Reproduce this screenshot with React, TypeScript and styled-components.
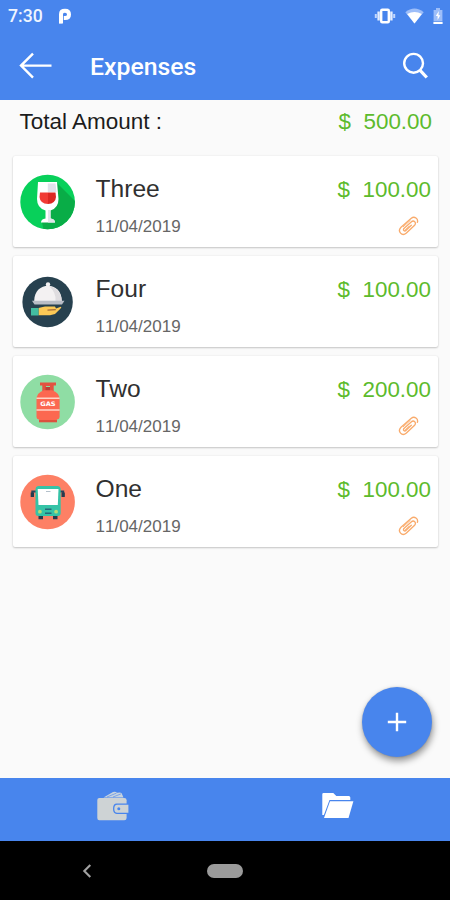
import React from "react";
import styled, { createGlobalStyle } from "styled-components";

const BLUE = "#4885ed";

const GlobalStyle = createGlobalStyle`
  * { box-sizing: border-box; }
  body { margin: 0; background: #fafafa; }
  svg { display: block; flex: none; }
`;

const Screen = styled.div`
  width: 450px;
  height: 900px;
  display: flex;
  flex-direction: column;
  overflow: hidden;
  background: #fafafa;
  font-family: "Liberation Sans", Arial, sans-serif;
`;

const Header = styled.header`
  height: 100px;
  flex: none;
  background: ${BLUE};
  color: #fff;
  font-family: Roboto, sans-serif;
`;

const StatusBar = styled.div`
  height: 32px;
  display: flex;
  align-items: center;
  padding: 0 7px 0 8px;
`;

const Clock = styled.span`
  font-size: 17.6px;
  line-height: 32px;
  width: 50px;
  font-weight: 500;
  color: #eff5ff;
`;

const StatusIcons = styled.div`
  margin-left: auto;
  display: flex;
  align-items: center;
  gap: 9px;
`;

const Toolbar = styled.div`
  height: 68px;
  display: flex;
  align-items: center;
  padding: 0 20px 0 19px;
`;

const Title = styled.h1`
  margin: 2px 0 0 38px;
  flex: 1;
  font-size: 24.8px;
  font-weight: 500;
  line-height: 32px;
`;

const Content = styled.main`
  flex: 1;
  display: flex;
  flex-direction: column;
`;

const TotalRow = styled.div`
  display: flex;
  justify-content: space-between;
  height: 56px;
  padding: 9px 18px 0 19.5px;
  font-size: 22.5px;
  line-height: 26px;
  color: #1c1c1c;
`;

const Amount = styled.span`
  color: #5cbb2c;
  font-size: 22.4px;
  line-height: 26px;
  white-space: pre;
`;

const ExpenseList = styled.ul`
  list-style: none;
  margin: 0;
  padding: 0 12px 0 13px;
  display: flex;
  flex-direction: column;
  gap: 9px;
`;

const Card = styled.li`
  height: 91px;
  display: flex;
  padding: 0 7px 0 7px;
  background: #fff;
  border-radius: 2px;
  box-shadow: 0 1px 2px rgba(0, 0, 0, 0.2), 0 0 2px rgba(0, 0, 0, 0.08);
`;

const Category = styled.div`
  width: 75.5px;
  padding-top: 18px;
`;

const Details = styled.div`
  flex: 1;
  padding-top: 19px;
`;

const Name = styled.div`
  font-size: 24.6px;
  line-height: 28px;
  color: #303030;
`;

const DateText = styled.div`
  margin-top: 14px;
  font-size: 17px;
  line-height: 20px;
  font-kerning: none;
  color: #666;
`;

const Values = styled.div`
  display: flex;
  flex-direction: column;
  align-items: flex-end;
  padding-top: 21px;
`;

const ClipSlot = styled.div`
  margin: 13px 12px 0 0;
`;

const FabRow = styled.div`
  margin-top: auto;
  display: flex;
  justify-content: flex-end;
  padding: 0 18px 21px 0;
`;

const Fab = styled.button`
  width: 70px;
  height: 70px;
  border: 0;
  padding: 0;
  border-radius: 50%;
  background: ${BLUE};
  display: flex;
  align-items: center;
  justify-content: center;
  box-shadow: 1px 4px 7px rgba(0, 0, 0, 0.42), 0 0 2px rgba(0, 0, 0, 0.15);
`;

const Tabs = styled.nav`
  height: 63px;
  flex: none;
  display: grid;
  grid-template-columns: 1fr 1fr;
  background: ${BLUE};
`;

const Tab = styled.div`
  display: flex;
  justify-content: center;
  padding-top: 12px;
`;

const SystemNav = styled.div`
  height: 59px;
  flex: none;
  display: flex;
  align-items: center;
  background: #000;
  padding: 0 0 0 82px;
`;

const HomePill = styled.div`
  width: 36px;
  height: 14px;
  margin-left: 115px;
  border-radius: 7px;
  background: #9b9b9b;
`;

const ParkingLogo = () => (
  <svg width="14" height="17" viewBox="0 0 14 17">
    <path d="M3 15.2V6.2Q3 2.8 7 2.8T11 6.4T7 10H5.8" fill="none" stroke="#fff" strokeWidth="4" />
    <path d="M1 7V15.5H4.6L5 11" fill="#fff" />
  </svg>
);

const VibrateIcon = () => (
  <svg width="22" height="18" viewBox="0 0 22 18">
    <rect x="7.2" y="2.8" width="7.6" height="12.4" rx="1" fill="none" stroke="#fff" strokeWidth="2.4" />
    <path d="M4.6 4.5V13.5M17.4 4.5V13.5" stroke="#e4eeff" strokeWidth="2.4" />
    <path d="M1.8 7V11M20.2 7V11" stroke="#c3d8fd" strokeWidth="2" />
  </svg>
);

const WifiIcon = () => (
  <svg width="19" height="16" viewBox="0 0 19 16">
    <path d="M.3 4.3Q9.5-3.2 18.7 4.3L9.5 15.5Z" fill="#9dbef9" />
    <path d="M2.2 6Q9.5 2 16.8 6L9.5 15.5Z" fill="#fff" />
  </svg>
);

const BatteryIcon = () => (
  <svg width="10" height="17" viewBox="0 0 10 17">
    <path d="M3 0H7V2H9.4V13H.6V2H3Z" fill="#9dbef9" />
    <path d="M5.8 3L2.8 8H4.6V12L7.3 7.2H5.5Z" fill="#fff" />
    <path d="M.4 13.8H9.6V16H.4Z" fill="#fff" />
  </svg>
);

const BackArrow = () => (
  <svg width="33" height="28" viewBox="0 0 33 28" fill="none" stroke="#fff" strokeWidth="2.4">
    <path d="M2 13.6H32.5M14 1.6L2 13.6L14 25.6" />
  </svg>
);

const SearchIcon = () => (
  <svg width="28" height="28" viewBox="0 0 28 28" fill="none" stroke="#fff">
    <circle cx="11.6" cy="11.3" r="9.4" strokeWidth="2.4" />
    <path d="M18.1 18.3L24.8 25.5" strokeWidth="3.2" />
  </svg>
);

const WineIcon = () => (
  <svg width="56" height="56" viewBox="0 0 56 56">
    <defs>
      <clipPath id="wine-disc"><circle cx="27.6" cy="28" r="27.3" /></clipPath>
    </defs>
    <g clipPath="url(#wine-disc)">
      <path d="M0 0H56V56H0Z" fill="#08d05a" />
      <path d="M37 9L58 30V58H24L22 48L28 42Z" fill="#09ad47" />
    </g>
    <path d="M18 8H37L38.5 25Q38.5 34 30.5 36.5V44.5Q35 45 35 48.5H21Q21 45 25.5 44.5V36.5Q17 34 17 25Z" fill="#fff" />
    <path d="M27.8 9.5H35.5L36.5 18H27.8Z" fill="#e0e2ea" />
    <path d="M28 36V48.5H35Q35 45 30.5 44.5V36Z" fill="#e2e6eb" />
    <path d="M20 18.5H28V30Q20 29.5 19.5 23Z" fill="#f13b34" />
    <path d="M28 18.5H35.5L36 23Q35.5 29.5 28 30Z" fill="#db2822" />
  </svg>
);

const DiningIcon = () => (
  <svg width="56" height="56" viewBox="0 0 56 56">
    <circle cx="27.6" cy="28" r="25.2" fill="#27414f" />
    <circle cx="28" cy="10.4" r="2.2" fill="#f3f1f1" />
    <path d="M14.2 27C14 6.5 42 6.5 41.8 27Z" fill="#f3f1f2" />
    <path d="M29 12Q40.5 14 41.8 27H35.5Q36.5 19 29 12Z" fill="#dfdde0" />
    <path d="M12 26.8H44.5L42 30.5H14.5Z" fill="#b9bdc6" />
    <path d="M18.5 34L25 32.4H35L36 34.6L40.8 32.7Q42 33 40.6 34.5L35 40L30 41.3H18.5Z" fill="#fcc956" />
    <path d="M27.5 36.2L35.8 35.6" stroke="#a56c3b" strokeWidth="1.3" />
    <path d="M11 34H18.5V41.5H11Z" fill="#43bda1" />
  </svg>
);

const GasText = styled.text`
  font: bold 6.2px "DejaVu Sans", sans-serif;
  fill: #fff;
`;

const GasIcon = () => (
  <svg width="56" height="56" viewBox="0 0 56 56">
    <circle cx="27.6" cy="28" r="27.3" fill="#8fdda4" />
    <path d="M20 8.5H36V11.5H33.7V17H30V12H26V17H22.3V11.5H20Z" fill="#e35240" />
    <path d="M25.5 13H30V18H25.5Z" fill="#ba3f35" />
    <path d="M24 16.3H32Q39.6 18.5 39.6 26V43Q39.5 45 37 45.5V48H19V45.5Q16.5 45 16.5 43V26Q16.5 18.5 24 16.3Z" fill="#fc6850" />
    <path d="M16.5 24.3H39.6M16.5 36H39.6" stroke="#ffd4c6" strokeWidth="1.4" />
    <path d="M19 46H37V48.3H19Z" fill="#dc513e" />
    <GasText x="20.2" y="32.2" textLength="15.5" lengthAdjust="spacingAndGlyphs">GAS</GasText>
  </svg>
);

const BusIcon = () => (
  <svg width="56" height="56" viewBox="0 0 56 56">
    <circle cx="27.6" cy="28" r="27.3" fill="#fd8065" />
    <path d="M17 17.5H12.3V22M38.5 17.5H43.2V22" fill="none" stroke="#28445b" strokeWidth="2" />
    <path d="M10.7 18.5H14V23H10.7ZM41.5 18.5H44.8V23H41.5ZM18.5 41H23V45.3H18.5ZM33 41H37.5V45.3H33Z" fill="#253b4e" />
    <path d="M18 12H38Q40.7 12.5 40.7 15V39Q40.7 42 38 42H18Q15.5 42 15.5 39V15Q15.5 12.5 18 12Z" fill="#35c3a7" />
    <path d="M17.7 15H38.5L37.8 31H18.5Z" fill="#fff" />
    <path d="M26 17.5H30.5" stroke="#b4c1cb" />
    <path d="M25 35.3H31.5M25 39.2H31.5" stroke="#286779" strokeWidth="1.6" />
    <circle cx="19.9" cy="37.7" r="1.9" fill="#b5dc78" />
    <circle cx="36.1" cy="37.7" r="1.9" fill="#b5dc78" />
  </svg>
);

const ClipIcon = () => (
  <svg width="21" height="20" viewBox="0 0 21 20" fill="none" stroke="#f9ab6c" strokeWidth="1.35" strokeLinecap="round" strokeLinejoin="round">
    <path d="M19.4 6.3C20.5 3 16.5-.4 13.3 2.3L3 11.3C-1 15.5 4 20.8 8.4 17L16.6 9.2C19 6.6 15.7 3.7 13.2 6L6.2 12.3C4.3 14.1 6.6 15.8 8.1 14.3L13.3 9.3" />
    <path d="M12.2 4.5L5.2 10.8M11 10.3L7.4 13.7" strokeWidth=".9" />
  </svg>
);

const PlusIcon = () => (
  <svg width="20" height="20" viewBox="0 0 20 20" stroke="#fff" strokeWidth="2.4">
    <path d="M.8 10H19.2M10 .8V19.2" />
  </svg>
);

const WalletIcon = () => (
  <svg width="33" height="32" viewBox="0 0 33 32">
    <path d="M7.5 7.5L17 2.1Q19.6 1 21 2.8L24 2.6Q26 2.6 26.5 5.3L27.5 7.5Z" fill="#c7d3df" />
    <path d="M11 7L20.5 3.1M17 7L25 3.9" stroke={BLUE} strokeWidth=".6" />
    <path d="M3.3 7.9H28.3Q30.6 7.9 30.6 10.2V28.1Q30.6 30.3 28.3 30.3H3.3Q1.3 30.3 1.3 28.1V10Q1.3 7.9 3.3 7.9Z" fill="#ced3d5" />
    <path d="M33 13.6H20.8Q17 13.6 17 18.8T20.8 23.9H33Z" fill={BLUE} />
    <path d="M32.4 14.7H21.3Q18.3 14.7 18.3 18.8T21.3 22.8H32.4Z" fill="#ced3d5" />
    <circle cx="22.8" cy="18.8" r="1.5" fill={BLUE} />
  </svg>
);

const FolderIcon = () => (
  <svg width="33" height="30" viewBox="0 0 33 30">
    <path d="M1.3 25V4.2Q1.3 2.9 2.5 2.9H12.3L15.3 6H27.8Q29.3 6 29.3 7.6V10H8.5L2.9 25Z" fill="#fff" />
    <path d="M9 11.3H32.4L27.5 28H3Z" fill="#fff" />
  </svg>
);

const NavBack = () => (
  <svg width="10" height="14" viewBox="0 0 10 14">
    <path d="M8.3 1L2.3 7L8.3 13" fill="none" stroke="#a2a2a2" strokeWidth="2.1" />
  </svg>
);

interface Expense {
  name: string;
  date: string;
  amount: string;
  icon: React.ReactNode;
  attached: boolean;
}

const expenses: Expense[] = [
  { name: "Three", date: "11/04/2019", amount: "100.00", icon: <WineIcon />, attached: true },
  { name: "Four", date: "11/04/2019", amount: "100.00", icon: <DiningIcon />, attached: false },
  { name: "Two", date: "11/04/2019", amount: "200.00", icon: <GasIcon />, attached: true },
  { name: "One", date: "11/04/2019", amount: "100.00", icon: <BusIcon />, attached: true },
];

export default function App() {
  return (
    <Screen>
      <GlobalStyle />
      <Header>
        <StatusBar>
          <Clock>7:30</Clock>
          <ParkingLogo />
          <StatusIcons>
            <VibrateIcon />
            <WifiIcon />
            <BatteryIcon />
          </StatusIcons>
        </StatusBar>
        <Toolbar>
          <BackArrow />
          <Title>Expenses</Title>
          <SearchIcon />
        </Toolbar>
      </Header>
      <Content>
        <TotalRow>
          <span>Total Amount :</span>
          <Amount>{"$  500.00"}</Amount>
        </TotalRow>
        <ExpenseList>
          {expenses.map((e) => (
            <Card key={e.name}>
              <Category>{e.icon}</Category>
              <Details>
                <Name>{e.name}</Name>
                <DateText>{e.date}</DateText>
              </Details>
              <Values>
                <Amount>{"$  " + e.amount}</Amount>
                {e.attached && (
                  <ClipSlot>
                    <ClipIcon />
                  </ClipSlot>
                )}
              </Values>
            </Card>
          ))}
        </ExpenseList>
        <FabRow>
          <Fab aria-label="Add expense">
            <PlusIcon />
          </Fab>
        </FabRow>
      </Content>
      <Tabs>
        <Tab>
          <WalletIcon />
        </Tab>
        <Tab>
          <FolderIcon />
        </Tab>
      </Tabs>
      <SystemNav>
        <NavBack />
        <HomePill />
      </SystemNav>
    </Screen>
  );
}
